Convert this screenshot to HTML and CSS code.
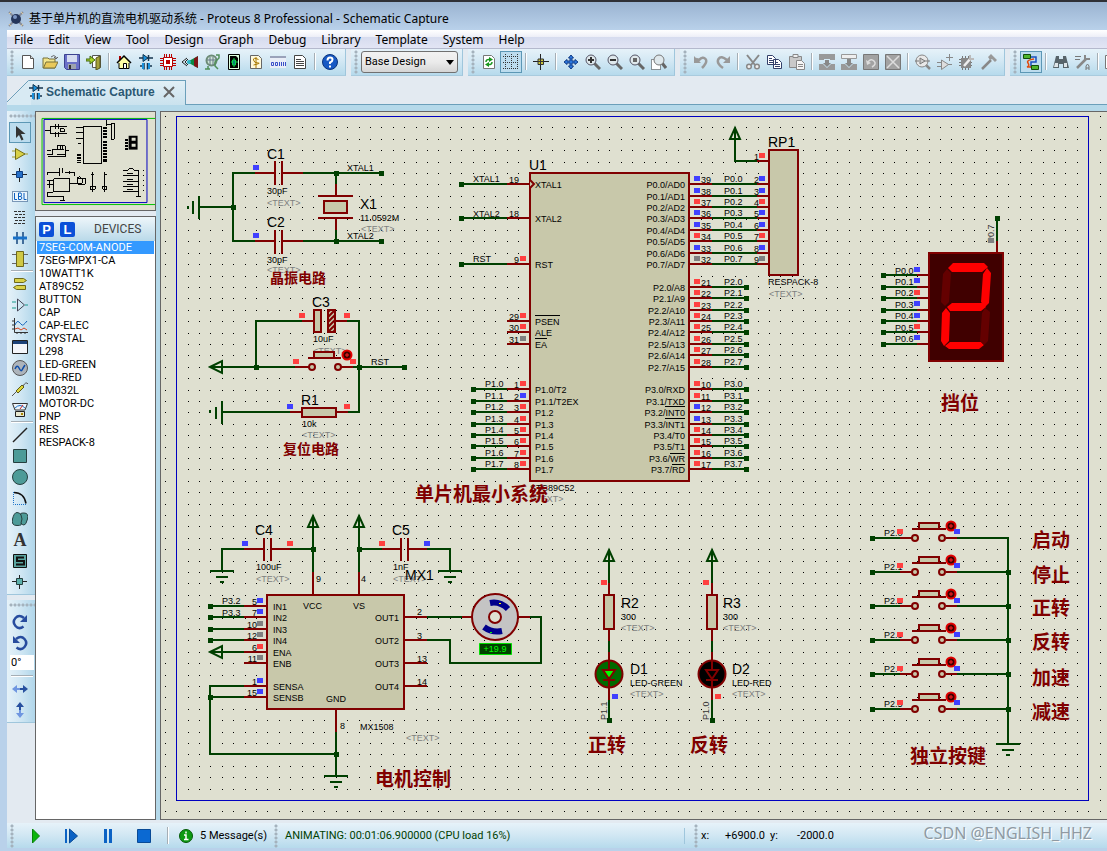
FILE: index.html
```html
<!DOCTYPE html>
<html lang="zh-CN">
<head>
<meta charset="utf-8">
<title>基于单片机的直流电机驱动系统 - Proteus 8 Professional - Schematic Capture</title>
<link rel="stylesheet" href="styles.css">
</head>
<body>
<div class="window">
<header class="titlebar">
<svg class="icon" viewBox="0 0 16 16"><path d="M1 1l4 4M15 1l-4 4M1 15l4-4M15 15l-4-4" stroke="#8a8f9a" stroke-width="2"/><path d="M1 3l2-2M13 1l2 2M1 13l2 2M15 13l-2 2" stroke="#d9c9a0"/><circle cx="8" cy="8" r="5" fill="#25365c"/><circle cx="7" cy="6" r="2" fill="#7d96c4"/></svg>
<span>基于单片机的直流电机驱动系统 - Proteus 8 Professional - Schematic Capture</span>
</header>
<div class="client">
<nav class="menubar">
<button>File</button><button>Edit</button><button>View</button><button>Tool</button><button>Design</button><button>Graph</button><button>Debug</button><button>Library</button><button>Template</button><button>System</button><button>Help</button>
</nav>
<div class="toolbars">
<div class="bar">
<i class="grip"></i>
<button aria-label="New"><svg class="icon" viewBox="0 0 16 16"><path d="M2.500 1.500h8l3 3v10h-11z" fill="#fff" stroke="#555"/><path d="M10.500 1.500v3h3" fill="#ddd" stroke="#555"/></svg></button>
<button aria-label="Open"><svg class="icon" viewBox="0 0 16 16"><path d="M1 4h5l1 1h6v9H1z" fill="#f2e58c" stroke="#77703a"/><path d="M1.500 14L4 8h12l-3 6z" fill="#e9c95a" stroke="#77703a"/><path d="M9 3q3-3 5 0v2m-2-2l2 2 2-2" fill="none" stroke="#666"/></svg></button>
<button aria-label="Save"><svg class="icon" viewBox="0 0 16 16"><path d="M.5.5h15v15h-13l-2-2z" fill="#6a70c8" stroke="#3c4290"/><path d="M3 1h10v7H3z" fill="#d5dcf0"/><path d="M4 10h8v5H4z" fill="#9da3ae"/><path d="M5 11h2v4H5z" fill="#333"/></svg></button>
<button aria-label="Close"><svg class="icon" viewBox="0 0 16 16"><path d="M6.500 1.500h8v12h-8z" fill="#fff" stroke="#555"/><path d="M14 2v12l-4 2V4z" fill="#a6a23a" stroke="#55531b"/><path d="M0 5h4V2l5 4-5 4V7H0z" fill="#a5d52b" stroke="#456812"/></svg></button>
<i class="sep"></i>
<button aria-label="Home"><svg class="icon" viewBox="0 0 16 16"><path d="M3 8v6.500h10V8" fill="#ffffa5" stroke="#000"/><path d="M3 2h2v3L3 7z" fill="#b00000"/><path d="M1 9l7-7 7 7" fill="#ffffa5" stroke="#000" stroke-width="1.500"/><path d="M4 14V8l4-4 4 4v6z" fill="#ffffa5"/><path d="M7.500 9.500h3v5h-3z" fill="#fff" stroke="#000"/></svg></button>
<button aria-label="Schematic"><svg class="icon" viewBox="0 0 16 16"><path d="M1 4h14M2 12h4M10 12h4M6 9v6.500M9.500 9v6.500M10.500 1v6" stroke="#15334c" stroke-width="1.500"/><path d="M5 .5l5 3.500-5 3.500z" fill="#1a91dd" stroke="#12344c"/><path d="M4 9h2v6H4zm6 0h2v6h-2z" fill="#1a91dd"/></svg></button>
<button aria-label="PCB"><svg class="icon" viewBox="0 0 16 16"><path d="M4.500 0v16M6.500 0v16M9.500 0v16M11.500 0v16M0 4.500h16M0 6.500h16M0 9.500h16M0 11.500h16" stroke="#b00"/><path d="M3.500 3.500h9v9h-9z" fill="#fff" stroke="#b00"/><path d="M6 6h4v4H6z" fill="#b00"/></svg></button>
<button aria-label="3D view"><svg class="icon" viewBox="0 0 16 16"><path d="M0 8l5-4M0 8l5 4M3 8l3-3M3 8l3 3" stroke="#222"/><path d="M5 8l11-6v12z" fill="#0b8a44"/><path d="M12 4.500L16 2v12l-4-2z" fill="#7d1518"/><circle cx="7" cy="8" r="2" fill="#29b3c7"/></svg></button>
<button aria-label="Gerber"><svg class="icon" viewBox="0 0 16 16"><circle cx="7.500" cy="6.500" r="5" fill="#cfe6d7" stroke="#6c8b77" stroke-width="2"/><path d="M3 6h9M6 3v8M9 3v8" stroke="#678"/><path d="M12 1h3v3l-4 4v4l3 3M4 12v3M1 15h5" fill="none" stroke="#4f8f58" stroke-width="1.500"/></svg></button>
<button aria-label="Design explorer"><svg class="icon" viewBox="0 0 16 16"><path d="M2.500.500h11v15h-11z" fill="#dfffe0" stroke="#000"/><path d="M4 2h6l2 2v10H4z" fill="#000"/><path d="M8 4v2m0 5v2M5 8h1m4 0h2M6.500 6h3v5h-3z" stroke="#0fd24c" fill="#087"/></svg></button>
<button aria-label="Bill of materials"><svg class="icon" viewBox="0 0 16 16"><path d="M2.500 1.500h8l3 3v10h-11z" fill="#fff9dc" stroke="#666"/><path d="M10.500 5.500Q5 3 5.500 6T10 9t-4.500 2M8 3v11" fill="none" stroke="#a87800"/></svg></button>
<button aria-label="Source"><svg class="icon" viewBox="0 0 16 16"><path d="M0 2h16v12H0z" fill="#e9edf7"/><path d="M0 2h16v2H0z" fill="#9aa2ba"/><path d="M1.500 8.500h2v3h-2zM5.500 8.500h2v3h-2z" fill="none" stroke="#3a4fc8"/><path d="M9.500 8v4m2-4v4m2-4v4m2-4v4" stroke="#3a4fc8"/></svg></button>
<button aria-label="Notes"><svg class="icon" viewBox="0 0 16 16"><path d="M2.500 1.500h8l3 3v10h-11z" fill="#fff" stroke="#444"/><path d="M4 5.500h5M4 7.500h8M4 9.500h8M4 11.500h8" stroke="#444"/></svg></button>
<i class="sep"></i>
<button aria-label="Help"><svg class="icon" viewBox="0 0 16 16"><circle cx="8" cy="8" r="7.500" fill="#1759c4" stroke="#0b347c"/><path d="M5.500 6.500q0-3 2.500-3t2.500 2.300Q10.500 7.500 8 8.500v1.500M8 11.500v2" fill="none" stroke="#fff" stroke-width="2"/></svg></button>
</div>
<div class="bar">
<i class="grip"></i>
<label class="variant"><select aria-label="Design variant"><option>Base Design</option></select><svg viewBox="0 0 8 5"><path d="M0 0h8L4 5z"/></svg></label>
</div>
<div class="bar">
<i class="grip"></i>
<button aria-label="Redraw"><svg class="icon" viewBox="0 0 16 16"><path d="M2.500 1.500h8l3 3v10h-11z" fill="#fff" stroke="#777"/><path d="M5 8q0-3 4-2.500M11 8q0 3-4 2.500" fill="none" stroke="#18961d" stroke-width="1.500"/><path d="M8 3l4 2.500L8 8zM8 8v5l-4-2.500z" fill="#18961d"/></svg></button>
<button class="on" aria-label="Grid"><svg class="icon" viewBox="0 0 16 16"><path d="M0 2.500h16M0 8.500h16M0 14.500h16M2.500 0v16M8.500 0v16M14.500 0v16" stroke="#333" stroke-dasharray="1 1"/></svg></button>
<i class="sep"></i>
<button aria-label="Origin"><svg class="icon" viewBox="0 0 16 16"><path d="M7.500 0v16M0 7.500h16" stroke="#222"/><path d="M5 5h5.500v5.500H5z" fill="#c9c43a" stroke="#333"/><path d="M7.500 5v6M5 7.500h6" stroke="#333"/></svg></button>
<i class="sep"></i>
<button aria-label="Pan"><svg class="icon" viewBox="0 0 16 16"><path d="M8 1l2.500 3H9v3h3V5.500L15 8l-3 2.500V9H9v3h1.500L8 15l-2.500-3H7V9H4v1.500L1 8l3-2.500V7h3V4H5.500z" fill="#2c77dd" stroke="#123c85"/></svg></button>
<button aria-label="Zoom in"><svg class="icon" viewBox="0 0 16 16"><path d="M9 9l6 6" stroke="#666" stroke-width="3"/><circle cx="6" cy="6" r="5" fill="#dfe8ec" stroke="#556"/><path d="M3 6h6M6 3v6" stroke="#333" stroke-width="2"/></svg></button>
<button aria-label="Zoom out"><svg class="icon" viewBox="0 0 16 16"><path d="M9 9l6 6" stroke="#666" stroke-width="3"/><circle cx="6" cy="6" r="5" fill="#dfe8ec" stroke="#556"/><path d="M3 6h6" stroke="#333" stroke-width="2"/></svg></button>
<button aria-label="Zoom all"><svg class="icon" viewBox="0 0 16 16"><path d="M9 9l6 6" stroke="#666" stroke-width="3"/><circle cx="6" cy="6" r="5" fill="#dfe8ec" stroke="#556"/><path d="M4 4h4v4H4z" fill="#666"/></svg></button>
<button aria-label="Zoom area"><svg class="icon" viewBox="0 0 16 16"><path d="M.5 5.500h9v10h-9z" fill="#fff" stroke="#333" stroke-dasharray="1 1"/><path d="M11 9l4 5" stroke="#666" stroke-width="3"/><circle cx="8" cy="6" r="5" fill="#dfe8ec" stroke="#777"/></svg></button>
</div>
<div class="bar">
<i class="grip"></i>
<button aria-label="Undo"><svg class="icon" viewBox="0 0 16 16"><path d="M3 5l3 1q4-4 6.500-1t-3.500 9" fill="none" stroke="#999" stroke-width="2.500"/><path d="M1 2v7h7z" fill="#999"/></svg></button>
<button aria-label="Redo"><svg class="icon" viewBox="0 0 16 16"><path d="M12 6Q6 1 3.500 5T8 14" fill="none" stroke="#999" stroke-width="2.500"/><path d="M15 2v7H8z" fill="#999"/></svg></button>
<i class="sep"></i>
<button aria-label="Cut"><svg class="icon" viewBox="0 0 16 16"><path d="M2 1l8 10M14 1L6 11" stroke="#888" stroke-width="2"/><circle cx="4" cy="12.500" r="2.300" fill="#eee" stroke="#888" stroke-width="1.500"/><circle cx="12" cy="12.500" r="2.300" fill="#eee" stroke="#888" stroke-width="1.500"/></svg></button>
<button aria-label="Copy"><svg class="icon" viewBox="0 0 16 16"><path d="M.5 1.500h5l3 3v6h-8zM6.500 5.500h5l3 3v6h-8z" fill="#fff" stroke="#33406a"/><path d="M2 4.500h3M2 6.500h4M2 8.500h4M8 8.500h3M8 10.500h5M8 12.500h5" stroke="#33406a"/></svg></button>
<button aria-label="Paste"><svg class="icon" viewBox="0 0 16 16"><path d="M.5 2.500h12v11H.5z" fill="#c9c9c9" stroke="#888"/><path d="M4 .5h5v3H4z" fill="#eee" stroke="#888"/><path d="M7.500 6.500h5l3 3v6h-8z" fill="#f5f5f5" stroke="#888"/><path d="M9 10.500h5M9 12.500h5" stroke="#888"/></svg></button>
<i class="sep"></i>
<button aria-label="Block copy"><svg class="icon" viewBox="0 0 16 16"><path d="M0 0h16v6h-5V5H5v1H0zM0 10h4l4 4 4-4h4v6H0z" fill="#999"/><path d="M6 6h4v3h2l-4 4-4-4h2z" fill="#888"/></svg></button>
<button aria-label="Block move"><svg class="icon" viewBox="0 0 16 16"><path d="M.5.5h15v4H.5z" fill="#eee" stroke="#999"/><path d="M0 10h4l4 4 4-4h4v6H0z" fill="#999"/><path d="M6 5h4v4h2l-4 4-4-4h2z" fill="#888"/></svg></button>
<button aria-label="Block rotate"><svg class="icon" viewBox="0 0 16 16"><path d="M.5.5h15v15H.5z" fill="#a2a2a2" stroke="#777"/><path d="M5 8q3-4 6-1t-2 6" fill="none" stroke="#ddd" stroke-width="1.500"/><path d="M3 6l5 3-4 2z" fill="#ddd"/></svg></button>
<button aria-label="Block delete"><svg class="icon" viewBox="0 0 16 16"><path d="M.5.5h15v15H.5z" fill="#a2a2a2" stroke="#777"/><path d="M2 2l12 12M14 2L2 14" stroke="#ddd" stroke-width="1.500"/></svg></button>
<i class="sep"></i>
<button aria-label="Pick parts"><svg class="icon" viewBox="0 0 16 16"><path d="M10 10l5 5" stroke="#888" stroke-width="2.500"/><circle cx="7" cy="7" r="6" fill="#e8e8e8" stroke="#888"/><path d="M0 7h4M10 7h5M5 4l5 3-5 3z" fill="#ccc" stroke="#777"/></svg></button>
<button aria-label="Make device"><svg class="icon" viewBox="0 0 16 16"><path d="M0 8.500h4M0 12.500h4M11 10.500h4M4.500 6l7 4.500-7 5zM12.500 0v7M9 3.500h7" fill="#ddd" stroke="#888"/></svg></button>
<button aria-label="Packaging tool"><svg class="icon" viewBox="0 0 16 16"><path d="M3.500 2v14M6.500 2v14M9.500 2v14M0 5.500h13M0 8.500h13M0 11.500h13" stroke="#777"/><path d="M2 4h10v10H2z" fill="#888"/><path d="M5 12l7-8" stroke="#eee" stroke-width="2.500"/><path d="M11 1v4h4" fill="none" stroke="#bbb" stroke-width="2"/></svg></button>
<button aria-label="Decompose"><svg class="icon" viewBox="0 0 16 16"><path d="M1 15l9-9" stroke="#888" stroke-width="2.500"/><path d="M7 3l3-3 6 6-2 2-3-3-2 1z" fill="#999"/></svg></button>
</div>
<div class="bar last">
<i class="grip"></i>
<button class="on" aria-label="Wire autorouter"><svg class="icon" viewBox="0 0 16 16"><path d="M8 3h5v5H8v5h2" fill="none" stroke="#1b4fc0" stroke-width="1.500"/><path d="M11 5q-8 1-6 4t-1 4h5" fill="none" stroke="#e04b10" stroke-width="1.500"/><path d="M.5.500h7v4h-7zM8.500 11.500h7v4h-7z" fill="#4db52c" stroke="#124d0a"/></svg></button>
<i class="sep"></i>
<button aria-label="Search"><svg class="icon" viewBox="0 0 16 16"><path d="M3 2h3v3h4V2h3l3 12h-6v-4H6v4H0z" fill="#58646a"/><path d="M2 9h3v4H1zm9 0h3v4h-3z" fill="#dfe5e8"/></svg></button>
<button aria-label="Property tool"><svg class="icon" viewBox="0 0 16 16"><path d="M0 2.500h6M0 5.500h5" stroke="#777"/><path d="M2 14L11 5" stroke="#888" stroke-width="2.500"/><path d="M10 1v4h5" fill="none" stroke="#888" stroke-width="2"/><path d="M11 16v-4l1.500-2 1.500 2v4M11 14h3" fill="none" stroke="#777"/></svg></button>
<i class="sep"></i>
<button aria-label="New sheet"><svg class="icon" viewBox="0 0 16 16"><path d="M.5 1.500h13v13H.5z" fill="#fff" stroke="#777"/><path d="M7 4v8M3 8h8" stroke="#888" stroke-width="2"/></svg></button>
</div>
</div>
<div class="tabs">
<svg class="slope" viewBox="0 0 24 25"><path d="M0 24L21.500.5H24V25H0z" fill="#d8eaf3"/><path d="M0 22L21.500.5H24" fill="none" stroke="#6b9fba"/></svg>
<div class="tab">
<svg class="icon" viewBox="0 0 16 16"><path d="M1 4h14M2 12h4M10 12h4M6 9v6.500M9.500 9v6.500M10.500 1v6" stroke="#15334c" stroke-width="1.500"/><path d="M5 .5l5 3.500-5 3.500z" fill="#1a91dd" stroke="#12344c"/><path d="M4 9h2v6H4zm6 0h2v6h-2z" fill="#1a91dd"/></svg>
<span>Schematic Capture</span>
<button aria-label="Close tab"><svg viewBox="0 0 12 12"><path d="M1 1l10 10M11 1L1 11" stroke="#666" stroke-width="2"/></svg></button>
</div>
</div>
<main class="work">
<aside class="tools">
<div class="vbar">
<i class="grip"></i>
<button class="on" aria-label="Selection"><svg class="icon" viewBox="0 0 16 16"><path d="M4 1v12l3-3 2.500 5.500 2-1L9 9h4.500z" fill="#333"/></svg></button>
<button aria-label="Component"><svg class="icon" viewBox="0 0 16 16"><path d="M0 5h4M0 11h4M12 8h4" stroke="#a39d2c"/><path d="M3.500 2.500L13 8l-9.500 5.500z" fill="#d8d147" stroke="#726c16"/></svg></button>
<button aria-label="Junction"><svg class="icon" viewBox="0 0 16 16"><path d="M7.500 1v14M0 7.500h15" stroke="#222"/><path d="M4.500 4.500h6v6h-6z" fill="#2670c9" stroke="#0e3f84"/></svg></button>
<button aria-label="Wire label"><svg class="icon" viewBox="0 0 16 16"><path d="M.5 3.500h15v10H.5z" fill="#eaf5fc" stroke="#123f75" stroke-dasharray="1 1"/><path d="M2.500 5v6.500H5M6.500 5v6.500H9l1-1.500-1-1.500H6.500M9 8.500l.5-2L9 5H6.500M12 5v6.500h2.500" fill="none" stroke="#0a5fc0"/></svg></button>
<button aria-label="Text script"><svg class="icon" viewBox="0 0 16 16"><path d="M2 2.500h12M3 5.500h10M2 8.500h12M3 11.500h10M2 14.500h12" stroke="#333" stroke-dasharray="3 1"/></svg></button>
<button aria-label="Bus"><svg class="icon" viewBox="0 0 16 16"><path d="M5 2v5M5 9v5M11 2v5M11 9v5" stroke="#14457e" stroke-width="1.500"/><path d="M1 8h14" stroke="#1971c8" stroke-width="3"/></svg></button>
<button aria-label="Subcircuit"><svg class="icon" viewBox="0 0 16 16"><path d="M0 3.500h16M0 12.500h16" stroke="#666"/><path d="M4.500.500h7v15h-7z" fill="#cfc845" stroke="#6d681b"/></svg></button>
<i class="sep"></i>
<button aria-label="Terminal"><svg class="icon" viewBox="0 0 16 16"><path d="M2.500 2.500h9l3 2-3 2h-9zM13.500 9.500h-9l-3 2 3 2h9z" fill="#d8d147" stroke="#6d681b"/></svg></button>
<button aria-label="Device pin"><svg class="icon" viewBox="0 0 16 16"><path d="M0 5h4M0 11h4M13 8h3" stroke="#1a9a8c"/><path d="M5.500 2v12l7-6z" fill="none" stroke="#445"/></svg></button>
<button aria-label="Graph"><svg class="icon" viewBox="0 0 16 16"><path d="M2.500 0v14.500H16M0 3h2M0 7h2M0 11h2M5 14v2M9 14v2M13 14v2" fill="none" stroke="#333"/><path d="M3 7q2-5 4-3t3 3 5-4" fill="none" stroke="#1565bb"/><path d="M3 11l3-1 3 2 3-2 3 2" fill="none" stroke="#d3431f"/></svg></button>
<button aria-label="Active popup"><svg class="icon" viewBox="0 0 16 16"><path d="M.5 1.500h15v13H.5z" fill="#f4f6fa" stroke="#222"/><path d="M1 2h14v3H1z" fill="#1d4279"/></svg></button>
<button aria-label="Generator"><svg class="icon" viewBox="0 0 16 16"><circle cx="8" cy="8" r="7.500" fill="#adb4bb" stroke="#555"/><path d="M3 9q2-5 4-1t3 2 3-5" fill="none" stroke="#0e4da8" stroke-width="1.500"/></svg></button>
<button aria-label="Probe"><svg class="icon" viewBox="0 0 16 16"><path d="M0 15l5-5" stroke="#555"/><path d="M4 10l6-6 2 2-6 6z" fill="#ddd63d" stroke="#5f5a16"/><path d="M11 5q3-5 5-2" fill="none" stroke="#555"/></svg></button>
<button aria-label="Instruments"><svg class="icon" viewBox="0 0 16 16"><path d="M.5 1.500h15L13 8H3z" fill="#eef5fa" stroke="#333"/><path d="M3 6q5-5 10 0" fill="none" stroke="#1971c8"/><path d="M8 7l3-4" stroke="#c22"/><path d="M3.500 9.500h9v5h-9z" fill="#e8e8d0" stroke="#222"/><path d="M9 12h2" stroke="#a80" stroke-width="2"/></svg></button>
<i class="sep"></i>
<button aria-label="Line"><svg class="icon" viewBox="0 0 16 16"><path d="M1 15L15 1" stroke="#222" stroke-width="1.500"/></svg></button>
<button aria-label="Box"><svg class="icon" viewBox="0 0 16 16"><path d="M1.500 1.500h13v13h-13z" fill="#4d9b98" stroke="#263f3f"/></svg></button>
<button aria-label="Circle"><svg class="icon" viewBox="0 0 16 16"><circle cx="8" cy="8" r="7.500" fill="#4d9b98" stroke="#263f3f"/></svg></button>
<button aria-label="Arc"><svg class="icon" viewBox="0 0 16 16"><path d="M1.500 2v12.500H14" fill="none" stroke="#1971c8" stroke-dasharray="1 1"/><path d="M2 2.500q10 0 12 11" fill="none" stroke="#111" stroke-width="1.500"/></svg></button>
<button aria-label="Path"><svg class="icon" viewBox="0 0 16 16"><path d="M9 4Q8 1.500 5 1.500T.5 8 5 14.500 9 12q1 2 3 2t3.500-6T12 2 9 4z" fill="#4d9b98" stroke="#263f3f"/><path d="M9 4q2 4 0 8" fill="none" stroke="#263f3f"/></svg></button>
<button aria-label="Text"><span class="letter">A</span></button>
<button aria-label="Symbol"><svg class="icon" viewBox="0 0 16 16"><path d="M1.500 1.500h13v13h-13z" fill="#5aa5a1" stroke="#111"/><path d="M12 4.500H5V8h7v3.500H4" fill="none" stroke="#111" stroke-width="2"/></svg></button>
<button aria-label="Marker"><svg class="icon" viewBox="0 0 16 16"><path d="M7.500 1v14M0 7.500h15" stroke="#222"/><path d="M4.500 4.500h6v6h-6z" fill="#5cb0ab" stroke="#263f3f"/></svg></button>
</div>
<div class="vbar">
<i class="grip"></i>
<button aria-label="Rotate clockwise"><svg class="icon" viewBox="0 0 16 16"><path d="M12 4Q7 0 3.500 4t0 8 8 .5" fill="none" stroke="#274c9e" stroke-width="2.500"/><path d="M15 1v7H8z" fill="#274c9e"/></svg></button>
<button aria-label="Rotate anticlockwise"><svg class="icon" viewBox="0 0 16 16"><path d="M4 4q5-4 8.500 0t0 8-8 .5" fill="none" stroke="#274c9e" stroke-width="2.500"/><path d="M1 1v7h7z" fill="#274c9e"/></svg></button>
<input class="angle" aria-label="Rotation angle" value="0°">
<i class="sep"></i>
<button aria-label="Mirror X"><svg class="icon" viewBox="0 0 16 16"><path d="M8 7H5V4L0 8l5 4V9h3z" fill="#6f96e0"/><path d="M8 7h3V4l5 4-5 4V9H8z" fill="#27509f"/></svg></button>
<button aria-label="Mirror Y"><svg class="icon" viewBox="0 0 16 16"><path d="M7 8V5H4l4-5 4 5H9v3z" fill="#27509f"/><path d="M7 8v3H4l4 5 4-5H9V8z" fill="#6f96e0"/></svg></button>
</div>
</aside>
<section class="side">
<div class="preview">
<svg viewBox="36 112 119 99">
<path d="M156 118.500H41.500v87H156" fill="none" stroke="#00c000"/>
<path d="M43.500 119.500h104v84h-104z" fill="none" stroke="#0000c0"/>
<g fill="none" stroke="#000" shape-rendering="crispEdges">
<path d="M83.500 126.500h18v38h-18zM111.500 123.500h3v16h-3zM53.500 179.500h16v13h-16z"/>
<path d="M44 130.500h6v-4h17M50 130v4h17M55 124v5M58 124v5M55 132v5M58 132v5M60 129h4v3h-4zM107 120v5h4M107 124v2"/>
<path d="M47 155h5v-5h5v-4h8v9h-8M47 151h4M65 151h4M57 150h7M60 145v4M62 145v4M48 157h17v-7"/>
<path d="M76 127.500h7M76 132.500h7M76 138.500h7M78 144h3"/>
<path d="M104 127v12M106.500 127v12M104 141v22M106.500 141v22M80 154v10M78 154v10" stroke-width="2" stroke-dasharray="2 1"/>
<path d="M127 139v11" stroke-width="3" stroke-dasharray="2 1"/>
<path d="M47 176v-3h12v4M59 169v5M62 169v5M65 173h9v4M69 172v3M47 181h7M47 185h7M49 181v8M47 193v4h16v5M60 201h5M69 184h10M78 179h7v6h-7M48 193h5M77 178q3-2 5 2v4h-5z"/>
<path d="M92 173v20M105 173v20M91 175h3M104 175h3M90 187h5v3h-5zM103 187h4v3h-4z"/>
<path d="M123 171h5l2-2h3l2 2h4v27M123 176h16M123 182h16M123 187h16M123 192h16M127 174h6M127 180h6M127 185h6M127 190h6M136 197h5"/>
<path d="M144 171v23" stroke-dasharray="1 4"/>
</g>
<path d="M129 136h9v14h-9z"/><path d="M132 138h4v3h-4zM132 144h4v3h-4z" fill="#dfe0d0"/>
</svg>
</div>
<div class="devices">
<div class="devhead"><button>P</button><button>L</button><span>DEVICES</span></div>
<ul>
<li class="sel">7SEG-COM-ANODE</li><li>7SEG-MPX1-CA</li><li>10WATT1K</li><li>AT89C52</li><li>BUTTON</li><li>CAP</li><li>CAP-ELEC</li><li>CRYSTAL</li><li>L298</li><li>LED-GREEN</li><li>LED-RED</li><li>LM032L</li><li>MOTOR-DC</li><li>PNP</li><li>RES</li><li>RESPACK-8</li>
</ul>
</div>
</section>
<section class="canvas">
<svg class="sheet">
<defs>
<pattern id="grid" x="176" y="116" width="57" height="57" patternUnits="userSpaceOnUse"><path d="M0 .5h57M0 11.500h57M0 23.500h57M0 34.500h57M0 46.500h57" stroke="#000" stroke-dasharray="1 11 1 10 1 10 1 11 1 10"/></pattern>
<pattern id="hatch" width="5" height="5" patternUnits="userSpaceOnUse"><path d="M-1 6L6-1M-1 1l2-2M4 6l2-2" stroke="#800000" stroke-width="2"/></pattern>
<path id="n" class="node" d="M-2-2h5v5h-5z"/>
<path id="r" fill="#ff4040" d="M-3-3h6v5h-6z"/>
<path id="b" fill="#4040ff" d="M-3-3h6v5h-6z"/>
<path id="y" fill="#808080" d="M-3-3h6v5h-6z"/>
<path id="pwr" class="w" d="M0 0l5 11h-10zV12"/>
<g id="gnd" class="w"><path d="M-12 0h24M-6 6h12M-2 11h4"/></g>
<g id="knob"><circle r="4.500" fill="#400000" stroke="#e00000" stroke-width="2"/><path d="M-2 0h4M0-2v4" stroke="#ff2020"/></g>
<g id="key">
<path class="w" d="M0 0h28M85 0h52"/><path class="p" d="M28 0h12M74 0h11M40-9h34"/>
<path class="c" d="M47-15h20v6h-20z"/><circle class="c" cx="43" r="3"/><circle class="c" cx="70" r="3"/>
<use href="#n"/><use href="#knob" x="79" y="-12"/>
</g>
</defs>
<g transform="translate(-161 -112)">
<rect x="161" y="112" width="100%" height="100%" fill="url(#grid)"/>
<path d="M176.500 116.500h912v684h-912z" fill="none" stroke="#0000c0"/>
<g class="t"><text class="g" x="313" y="354">&lt;TEXT&gt;</text></g>

<g class="w">
<path d="M199 207h34M255 173h-22v68h22M303 173h78M303 241h78M336 173v11M336 230v11M193 201v13M199 196v23M188 206v3"/>
<path d="M302 321h-46v46M210 367h85M347 321h12v91h-11M353 367h51M290 412h-68M222 401v23M216 407v12M210 410v3M210 367l12-6v12z"/>
<path d="M461 184h46M461 218h46M461 264h46M473 389h34M473 401h34M473 412h34M473 424h34M473 435h34M473 446h34M473 458h34M473 469h34"/>
<path d="M712 184h45M712 196h45M712 207h45M712 218h45M712 230h45M712 241h45M712 253h45M712 264h45M735 139v22h22"/>
<path d="M712 287h35M712 298h35M712 310h35M712 321h35M712 332h35M712 344h35M712 355h35M712 367h35M712 389h35M712 401h35M712 412h35M712 424h35M712 435h35M712 446h35M712 458h35M712 469h35"/>
<path d="M313 527v45M359 527v45M244 549h-22v22M290 549h23M359 549h23M427 549h23v22"/>
<path d="M210 606h34M210 617h34M210 629h34M210 640h34M210 652h34M210 652l12-6v12zM244 686h-34v68h126M210 697h34M336 732v44M427 617h35M427 640h23v23h91v-46h-11"/>
<path d="M609 560v23M609 641v11M609 700v20M712 560v23M712 641v11M712 700v20"/>
<path d="M883 275h34M883 287h34M883 298h34M883 310h34M883 321h34M883 332h34M883 344h34M997 218v23M1008 538v206"/>
</g>
<use href="#pwr" x="735" y="128"/><use href="#pwr" x="313" y="516"/><use href="#pwr" x="359" y="516"/><use href="#pwr" x="609" y="550"/><use href="#pwr" x="712" y="550"/>
<use href="#gnd" x="222" y="571"/><use href="#gnd" x="450" y="571"/><use href="#gnd" x="336" y="776"/><use href="#gnd" x="1008" y="744"/>

<g class="p">
<path d="M255 173h20M282 173h21M275 161v24M282 161v24M255 241h20M282 241h21M275 230v24M282 230v24M336 184v12M318 196h35M318 218h35M336 218v12"/>
<path d="M302 321h12M335 321h12M295 367h14M341 367h12M308 358h33M290 412h12M336 412h12"/>
<path d="M507 184h23M507 218h23M507 264h23M507 321h23M507 332h23M507 344h23M507 389h23M507 401h23M507 412h23M507 424h23M507 435h23M507 446h23M507 458h23M507 469h23"/>
<path d="M689 184h23M689 196h23M689 207h23M689 218h23M689 230h23M689 241h23M689 253h23M689 264h23M757 161h12M757 184h12M757 196h12M757 207h12M757 218h12M757 230h12M757 241h12M757 253h12M757 264h12"/>
<path d="M689 287h23M689 298h23M689 310h23M689 321h23M689 332h23M689 344h23M689 355h23M689 367h23M689 389h23M689 401h23M689 412h23M689 424h23M689 435h23M689 446h23M689 458h23M689 469h23"/>
<path d="M313 572v23M359 572v23M244 549h20M271 549h19M264 538v23M271 538v23M382 549h19M408 549h19M401 538v23M408 538v23"/>
<path d="M244 606h23M244 617h23M244 629h23M244 640h23M244 652h23M244 663h23M244 686h23M244 697h23M404 617h23M404 640h23M404 663h23M404 686h23M336 709v23M462 617h11M518 617h12"/>
<path d="M609 583v12M609 629v12M609 652v9M609 688v12M712 583v12M712 629v12M712 652v9M712 688v12"/>
<path d="M917 275h12M917 287h12M917 298h12M917 310h12M917 321h12M917 332h12M917 344h12M997 241v12"/>
</g>
<g class="c">
<path d="M324 201h23v12h-23zM314 310h7v22h-7zM314 352h20v6h-20zM302 408h34v9h-34zM530 173h159v308h-159zM769 150h29v125h-29zM267 595h137v114h-137zM604 595h10v34h-10zM707 595h10v34h-10z"/>
<path d="M530 180l4 4-4 4"/><circle cx="312" cy="367" r="3"/><circle cx="338" cy="367" r="3"/>
</g>
<path d="M328 310h7v22h-7z" fill="#c8c8aa"/><path class="hatched" d="M328 310h7v22h-7z"/>
<use href="#knob" x="347" y="355"/>

<g><use href="#n" x="233" y="207"/><use href="#n" x="336" y="173"/><use href="#n" x="336" y="241"/><use href="#n" x="381" y="173"/><use href="#n" x="381" y="241"/><use href="#n" x="256" y="367"/><use href="#n" x="359" y="367"/><use href="#n" x="404" y="367"/><use href="#n" x="461" y="184"/><use href="#n" x="461" y="218"/><use href="#n" x="461" y="264"/>
<use href="#n" x="473" y="389"/><use href="#n" x="473" y="401"/><use href="#n" x="473" y="412"/><use href="#n" x="473" y="424"/><use href="#n" x="473" y="435"/><use href="#n" x="473" y="446"/><use href="#n" x="473" y="458"/><use href="#n" x="473" y="469"/>
<use href="#n" x="746" y="287"/><use href="#n" x="746" y="298"/><use href="#n" x="746" y="310"/><use href="#n" x="746" y="321"/><use href="#n" x="746" y="332"/><use href="#n" x="746" y="344"/><use href="#n" x="746" y="355"/><use href="#n" x="746" y="367"/><use href="#n" x="746" y="389"/><use href="#n" x="746" y="401"/><use href="#n" x="746" y="412"/><use href="#n" x="746" y="424"/><use href="#n" x="746" y="435"/><use href="#n" x="746" y="446"/><use href="#n" x="746" y="458"/><use href="#n" x="746" y="469"/>
<use href="#n" x="313" y="549"/><use href="#n" x="359" y="549"/><use href="#n" x="210" y="606"/><use href="#n" x="210" y="617"/><use href="#n" x="210" y="629"/><use href="#n" x="210" y="640"/><use href="#n" x="210" y="697"/><use href="#n" x="336" y="754"/><use href="#n" x="609" y="720"/><use href="#n" x="712" y="720"/>
<use href="#n" x="883" y="275"/><use href="#n" x="883" y="287"/><use href="#n" x="883" y="298"/><use href="#n" x="883" y="310"/><use href="#n" x="883" y="321"/><use href="#n" x="883" y="332"/><use href="#n" x="883" y="344"/><use href="#n" x="997" y="218"/>
<use href="#n" x="1008" y="572"/><use href="#n" x="1008" y="606"/><use href="#n" x="1008" y="640"/><use href="#n" x="1008" y="674"/><use href="#n" x="1008" y="709"/></g>

<g class="t">
<text class="g"><tspan x="267" y="206">&lt;TEXT&gt;</tspan><tspan x="267" y="273">&lt;TEXT&gt;</tspan><tspan x="361" y="232">&lt;TEXT&gt;</tspan><tspan x="302" y="438">&lt;TEXT&gt;</tspan><tspan x="530" y="502">&lt;TEXT&gt;</tspan><tspan x="769" y="297">&lt;TEXT&gt;</tspan><tspan x="256" y="582">&lt;TEXT&gt;</tspan><tspan x="393" y="582">&lt;TEXT&gt;</tspan><tspan x="406" y="741">&lt;TEXT&gt;</tspan><tspan x="621" y="631">&lt;TEXT&gt;</tspan><tspan x="723" y="631">&lt;TEXT&gt;</tspan><tspan x="630" y="697">&lt;TEXT&gt;</tspan><tspan x="732" y="697">&lt;TEXT&gt;</tspan></text>
<text class="big"><tspan x="267" y="159">C1</tspan><tspan x="267" y="227">C2</tspan><tspan x="360" y="209">X1</tspan><tspan x="312" y="307">C3</tspan><tspan x="301" y="405">R1</tspan><tspan x="529" y="170">U1</tspan><tspan x="768" y="147">RP1</tspan><tspan x="255" y="535">C4</tspan><tspan x="392" y="535">C5</tspan><tspan x="405" y="580">MX1</tspan><tspan x="621" y="608">R2</tspan><tspan x="723" y="608">R3</tspan><tspan x="630" y="674">D1</tspan><tspan x="732" y="674">D2</tspan></text>
<text><tspan x="267" y="194">30pF</tspan><tspan x="267" y="263">30pF</tspan><tspan x="360" y="221">11.0592M</tspan><tspan x="347" y="171">XTAL1</tspan><tspan x="347" y="239">XTAL2</tspan><tspan x="313" y="342">10uF</tspan><tspan x="371" y="365">RST</tspan><tspan x="302" y="427">10k</tspan><tspan x="530" y="491">STC89C52</tspan><tspan x="768" y="285">RESPACK-8</tspan><tspan x="256" y="570">100uF</tspan><tspan x="393" y="570">1nF</tspan><tspan x="316" y="582">9</tspan><tspan x="361" y="582">4</tspan><tspan x="340" y="729">8</tspan><tspan x="360" y="730">MX1508</tspan><tspan x="621" y="620">300</tspan><tspan x="723" y="620">300</tspan><tspan x="630" y="686">LED-GREEN</tspan><tspan x="732" y="686">LED-RED</tspan></text>
<text><tspan x="473" y="182">XTAL1</tspan><tspan x="473" y="217">XTAL2</tspan><tspan x="473" y="262">RST</tspan><tspan x="535" y="188">XTAL1</tspan><tspan x="535" y="222">XTAL2</tspan><tspan x="535" y="268">RST</tspan><tspan x="535" y="325">PSEN</tspan><tspan x="535" y="336">ALE</tspan><tspan x="535" y="348">EA</tspan><tspan x="535" y="393">P1.0/T2</tspan><tspan x="535" y="405">P1.1/T2EX</tspan><tspan x="535" y="416">P1.2</tspan><tspan x="535" y="428">P1.3</tspan><tspan x="535" y="439">P1.4</tspan><tspan x="535" y="450">P1.5</tspan><tspan x="535" y="462">P1.6</tspan><tspan x="535" y="473">P1.7</tspan></text>
<text class="e"><tspan x="685" y="188">P0.0/AD0</tspan><tspan x="685" y="200">P0.1/AD1</tspan><tspan x="685" y="211">P0.2/AD2</tspan><tspan x="685" y="222">P0.3/AD3</tspan><tspan x="685" y="234">P0.4/AD4</tspan><tspan x="685" y="245">P0.5/AD5</tspan><tspan x="685" y="257">P0.6/AD6</tspan><tspan x="685" y="268">P0.7/AD7</tspan><tspan x="685" y="291">P2.0/A8</tspan><tspan x="685" y="302">P2.1/A9</tspan><tspan x="685" y="314">P2.2/A10</tspan><tspan x="685" y="325">P2.3/A11</tspan><tspan x="685" y="336">P2.4/A12</tspan><tspan x="685" y="348">P2.5/A13</tspan><tspan x="685" y="359">P2.6/A14</tspan><tspan x="685" y="371">P2.7/A15</tspan><tspan x="685" y="393">P3.0/RXD</tspan><tspan x="685" y="405">P3.1/TXD</tspan><tspan x="685" y="416">P3.2/INT0</tspan><tspan x="685" y="428">P3.3/INT1</tspan><tspan x="685" y="439">P3.4/T0</tspan><tspan x="685" y="450">P3.5/T1</tspan><tspan x="685" y="462">P3.6/WR</tspan><tspan x="685" y="473">P3.7/RD</tspan></text>
<path d="M535 315.500h25M535 338.500h12M665 406.500h20M665 418.500h20M670 453.500h15M672 464.500h13" stroke="#000"/>
<text class="e"><tspan x="519" y="183">19</tspan><tspan x="519" y="217">18</tspan><tspan x="519" y="263">9</tspan><tspan x="519" y="320">29</tspan><tspan x="519" y="331">30</tspan><tspan x="519" y="343">31</tspan><tspan x="519" y="388">1</tspan><tspan x="519" y="400">2</tspan><tspan x="519" y="411">3</tspan><tspan x="519" y="423">4</tspan><tspan x="519" y="434">5</tspan><tspan x="519" y="445">6</tspan><tspan x="519" y="457">7</tspan><tspan x="519" y="468">8</tspan><tspan x="759" y="160">1</tspan><tspan x="759" y="183">2</tspan><tspan x="759" y="195">3</tspan><tspan x="759" y="206">4</tspan><tspan x="759" y="217">5</tspan><tspan x="759" y="229">6</tspan><tspan x="759" y="240">7</tspan><tspan x="759" y="252">8</tspan><tspan x="759" y="263">9</tspan></text>
<text><tspan x="485" y="387">P1.0</tspan><tspan x="485" y="399">P1.1</tspan><tspan x="485" y="410">P1.2</tspan><tspan x="485" y="422">P1.3</tspan><tspan x="485" y="433">P1.4</tspan><tspan x="485" y="444">P1.5</tspan><tspan x="485" y="456">P1.6</tspan><tspan x="485" y="467">P1.7</tspan></text>
<text><tspan x="701" y="183">39</tspan><tspan x="701" y="195">38</tspan><tspan x="701" y="206">37</tspan><tspan x="701" y="217">36</tspan><tspan x="701" y="229">35</tspan><tspan x="701" y="240">34</tspan><tspan x="701" y="252">33</tspan><tspan x="701" y="263">32</tspan><tspan x="701" y="286">21</tspan><tspan x="701" y="297">22</tspan><tspan x="701" y="309">23</tspan><tspan x="701" y="320">24</tspan><tspan x="701" y="331">25</tspan><tspan x="701" y="343">26</tspan><tspan x="701" y="354">27</tspan><tspan x="701" y="366">28</tspan><tspan x="701" y="388">10</tspan><tspan x="701" y="400">11</tspan><tspan x="701" y="411">12</tspan><tspan x="701" y="423">13</tspan><tspan x="701" y="434">14</tspan><tspan x="701" y="445">15</tspan><tspan x="701" y="457">16</tspan><tspan x="701" y="468">17</tspan></text>
<text><tspan x="724" y="182">P0.0</tspan><tspan x="724" y="194">P0.1</tspan><tspan x="724" y="205">P0.2</tspan><tspan x="724" y="216">P0.3</tspan><tspan x="724" y="228">P0.4</tspan><tspan x="724" y="239">P0.5</tspan><tspan x="724" y="251">P0.6</tspan><tspan x="724" y="262">P0.7</tspan><tspan x="724" y="285">P2.0</tspan><tspan x="724" y="296">P2.1</tspan><tspan x="724" y="308">P2.2</tspan><tspan x="724" y="319">P2.3</tspan><tspan x="724" y="330">P2.4</tspan><tspan x="724" y="342">P2.5</tspan><tspan x="724" y="353">P2.6</tspan><tspan x="724" y="365">P2.7</tspan><tspan x="724" y="387">P3.0</tspan><tspan x="724" y="399">P3.1</tspan><tspan x="724" y="410">P3.2</tspan><tspan x="724" y="422">P3.3</tspan><tspan x="724" y="433">P3.4</tspan><tspan x="724" y="444">P3.5</tspan><tspan x="724" y="456">P3.6</tspan><tspan x="724" y="467">P3.7</tspan></text>
<text><tspan x="273" y="610">IN1</tspan><tspan x="273" y="621">IN2</tspan><tspan x="273" y="633">IN3</tspan><tspan x="273" y="644">IN4</tspan><tspan x="273" y="656">ENA</tspan><tspan x="273" y="667">ENB</tspan><tspan x="273" y="690">SENSA</tspan><tspan x="273" y="701">SENSB</tspan><tspan x="303" y="609">VCC</tspan><tspan x="353" y="609">VS</tspan><tspan x="326" y="702">GND</tspan><tspan x="222" y="604">P3.2</tspan><tspan x="222" y="616">P3.3</tspan><tspan x="417" y="615">2</tspan><tspan x="417" y="639">3</tspan><tspan x="417" y="662">13</tspan><tspan x="417" y="685">14</tspan></text>
<text class="e"><tspan x="399" y="621">OUT1</tspan><tspan x="399" y="644">OUT2</tspan><tspan x="399" y="667">OUT3</tspan><tspan x="399" y="690">OUT4</tspan><tspan x="257" y="605">5</tspan><tspan x="257" y="616">7</tspan><tspan x="257" y="628">10</tspan><tspan x="257" y="639">12</tspan><tspan x="257" y="651">6</tspan><tspan x="257" y="662">11</tspan><tspan x="257" y="685">1</tspan><tspan x="257" y="696">15</tspan></text>
<text><tspan x="895" y="274">P0.0</tspan><tspan x="895" y="285">P0.1</tspan><tspan x="895" y="296">P0.2</tspan><tspan x="895" y="308">P0.3</tspan><tspan x="895" y="319">P0.4</tspan><tspan x="895" y="331">P0.5</tspan><tspan x="895" y="342">P0.6</tspan><tspan x="884" y="536">P2.0</tspan><tspan x="884" y="570">P2.1</tspan><tspan x="884" y="604">P2.2</tspan><tspan x="884" y="638">P2.3</tspan><tspan x="884" y="672">P2.4</tspan><tspan x="884" y="707">P2.5</tspan></text>
<text class="net" transform="translate(607 720) rotate(-90)">P1.1</text>
<text class="net" transform="translate(709 720) rotate(-90)">P1.0</text>
<text class="net" transform="translate(994 243) rotate(-90)">P0.7</text>
</g>

<g><use href="#b" x="256" y="168"/><use href="#b" x="256" y="236"/><use href="#r" x="302" y="316"/><use href="#r" x="347" y="316"/><use href="#r" x="296" y="362"/><use href="#r" x="353" y="362"/><use href="#b" x="290" y="407"/><use href="#r" x="347" y="407"/>
<use href="#r" x="523" y="259"/><use href="#r" x="523" y="316"/><use href="#r" x="523" y="327"/><use href="#y" x="523" y="339"/><use href="#r" x="523" y="384"/><use href="#b" x="523" y="396"/><use href="#r" x="523" y="407"/><use href="#r" x="523" y="419"/><use href="#r" x="523" y="430"/><use href="#r" x="523" y="441"/><use href="#r" x="523" y="453"/><use href="#r" x="523" y="464"/>
<use href="#b" x="697" y="179"/><use href="#b" x="697" y="191"/><use href="#r" x="697" y="202"/><use href="#b" x="697" y="213"/><use href="#b" x="697" y="225"/><use href="#r" x="697" y="236"/><use href="#b" x="697" y="248"/><use href="#y" x="697" y="259"/><use href="#r" x="762" y="156"/><use href="#b" x="762" y="179"/><use href="#b" x="762" y="191"/><use href="#r" x="762" y="202"/><use href="#b" x="762" y="213"/><use href="#b" x="762" y="225"/><use href="#r" x="762" y="236"/><use href="#b" x="762" y="248"/><use href="#y" x="762" y="259"/>
<use href="#r" x="697" y="282"/><use href="#r" x="697" y="293"/><use href="#r" x="697" y="305"/><use href="#r" x="697" y="316"/><use href="#r" x="697" y="327"/><use href="#r" x="697" y="339"/><use href="#r" x="697" y="350"/><use href="#r" x="697" y="362"/><use href="#r" x="697" y="384"/><use href="#r" x="697" y="396"/><use href="#b" x="697" y="407"/><use href="#b" x="697" y="419"/><use href="#r" x="697" y="430"/><use href="#r" x="697" y="441"/><use href="#r" x="697" y="453"/><use href="#r" x="697" y="464"/>
<use href="#b" x="245" y="544"/><use href="#r" x="290" y="544"/><use href="#r" x="382" y="544"/><use href="#b" x="427" y="544"/><use href="#b" x="260" y="601"/><use href="#b" x="260" y="612"/><use href="#y" x="260" y="624"/><use href="#y" x="260" y="635"/><use href="#r" x="260" y="647"/><use href="#y" x="260" y="658"/><use href="#b" x="260" y="681"/><use href="#b" x="260" y="692"/>
<use href="#r" x="604" y="583"/><use href="#b" x="615" y="697"/><use href="#r" x="706" y="583"/><use href="#r" x="718" y="697"/>
<use href="#b" x="917" y="270"/><use href="#b" x="917" y="281"/><use href="#r" x="917" y="293"/><use href="#b" x="917" y="304"/><use href="#b" x="917" y="316"/><use href="#r" x="917" y="327"/><use href="#b" x="917" y="338"/><use href="#y" x="991" y="241"/></g>

<circle cx="495" cy="617" r="23" fill="#c4c4c4" stroke="#800000" stroke-width="2"/><circle cx="495" cy="617" r="6" fill="#dfe0d0" stroke="#800000" stroke-width="2"/>
<path d="M490 603q10-2 18 6" fill="none" stroke="#00008b" stroke-width="6"/><path d="M502 631q-10 2-18-4" fill="none" stroke="#00008b" stroke-width="6"/><path d="M499 603.500h2" stroke="#ff0"/><path d="M490 632.500h2" stroke="#0f0"/>
<path d="M479.500 643.500h32v11h-32z" fill="#004000" stroke="#00e000"/><text class="rpm" x="495" y="652">+19.9</text>

<circle cx="609" cy="674" r="13.500" fill="#006a00" stroke="#800000" stroke-width="2"/><path class="p" d="M609 660v10M609 680v9"/><path d="M603 670h12l-6 9z" fill="#00ff00" stroke="#800000" stroke-width="2"/><path class="p" d="M603 680h12"/>
<circle cx="712" cy="674" r="13.500" fill="#000" stroke="#800000" stroke-width="2"/><path class="p" d="M712 660v10M712 680v9"/><path d="M706 670h12l-6 9z" fill="#000" stroke="#800000" stroke-width="2"/><path class="p" d="M706 680h12"/>

<path d="M929 253h74v108h-74z" fill="#400000" stroke="#800000" stroke-width="2"/>
<g fill="#ff0000"><path d="M948 268l5-5h31l4 4-6 5h-30zM987 268l4 5-2 30-4 4-4-5 2-28zM947 307l5-4h31l3 4-5 4h-31zM946 308l4 5-1 28-5 5-3-5 1-28zM945 346l5-4h31l3 3-5 4h-30z"/></g>
<g fill="#640000"><path d="M947 269l4 4-2 29-4 4-4-4 2-28zM985 308l5 4-2 29-4 4-4-4 2-28z"/></g>

<use href="#key" x="872" y="538"/><use href="#key" x="872" y="572"/><use href="#key" x="872" y="606"/><use href="#key" x="872" y="640"/><use href="#key" x="872" y="674"/><use href="#key" x="872" y="709"/>
<use href="#r" x="900" y="532"/><use href="#r" x="900" y="566"/><use href="#r" x="900" y="601"/><use href="#r" x="900" y="635"/><use href="#r" x="900" y="669"/><use href="#r" x="900" y="703"/>
<use href="#b" x="957" y="532"/><use href="#b" x="957" y="566"/><use href="#b" x="957" y="601"/><use href="#b" x="957" y="635"/><use href="#b" x="957" y="669"/><use href="#b" x="957" y="703"/>

<g class="zh">
<text class="sm"><tspan x="270" y="283">晶振电路</tspan><tspan x="283" y="454">复位电路</tspan></text>
<text><tspan x="415" y="501">单片机最小系统</tspan><tspan x="375" y="786">电机控制</tspan><tspan x="588" y="752">正转</tspan><tspan x="690" y="752">反转</tspan><tspan x="941" y="410">挡位</tspan><tspan x="910" y="763">独立按键</tspan><tspan x="1032" y="547">启动</tspan><tspan x="1032" y="582">停止</tspan><tspan x="1032" y="615">正转</tspan><tspan x="1032" y="649">反转</tspan><tspan x="1032" y="685">加速</tspan><tspan x="1032" y="719">减速</tspan></text>
</g>
</g>
</svg>
</section>
</main>
<footer class="status">
<i class="grip"></i>
<div class="run">
<button aria-label="Play"><svg class="icon" viewBox="0 0 16 16"><path d="M4.500 1l7 7-7 7z" fill="#0bb50b" stroke="#078307"/></svg></button>
<button aria-label="Step"><svg class="icon" viewBox="0 0 16 16"><path d="M2 1v14" stroke="#0b62c4" stroke-width="2"/><path d="M5.500 1l8 7-8 7z" fill="#0b62c4" stroke="#084a96"/></svg></button>
<button aria-label="Pause"><svg class="icon" viewBox="0 0 16 16"><path d="M4 1h3v14H4zM9 1h3v14H9z" fill="#0b62c4"/></svg></button>
<button aria-label="Stop"><svg class="icon" viewBox="0 0 16 16"><path d="M1.500 1.500h13v13h-13z" fill="#0b69d2" stroke="#084a96"/></svg></button>
</div>
<i class="sep"></i>
<button class="msgs"><svg class="icon" viewBox="0 0 16 16"><circle cx="8" cy="8" r="6.500" fill="#0d9a12" stroke="#055a08"/><path d="M6 7h2v4m-2 .5h4.500M8 3.500v2" fill="none" stroke="#fff" stroke-width="1.500"/></svg>5 Message(s)</button>
<i class="grip"></i>
<span class="anim">ANIMATING: 00:01:06.900000 (CPU load 16%)</span>
<i class="grip"></i>
<span class="coord">x:</span><span class="coord wide">+6900.0</span><span class="coord">y:</span><span class="coord wide">-2000.0</span>
<span class="mark">CSDN @ENGLISH_HHZ</span>
</footer>
</div>
</div>
</body>
</html>
```
FILE: styles.css
```css
* { box-sizing: border-box; }
body { margin: 0; font: 12px/16px "Noto Sans", "Noto Sans CJK SC", sans-serif; color: #000; }
button { border: 0; background: none; padding: 0; margin: 0; font: inherit; color: inherit; flex: none; }
.icon { width: 16px; height: 16px; flex: none; display: block; fill: none; }
.window { height: 100vh; display: flex; flex-direction: column; border-top: 2px solid #2f3036; background: #b9d1ea; overflow: hidden; }
.titlebar { flex: none; height: 28px; display: flex; align-items: center; gap: 5px; padding: 6px 8px 0; background: linear-gradient(#9ab3d1, #b9d1ea); white-space: nowrap; }
.client { flex: 1; min-height: 0; margin: 0 0 3px 7px; display: flex; flex-direction: column; background: #e3eaf1; }

.menubar { flex: none; height: 19px; display: flex; gap: 1px; align-items: center; background: linear-gradient(#fff, #eef0f8 36%, #d6dcef 40%, #e2e5f4); border-bottom: 1px solid #b4b9cd; }
.menubar button { padding: 2px 7px 0; height: 18px; line-height: 16px; }

.toolbars { flex: none; height: 27px; display: flex; gap: 5px; overflow: hidden; }
.bar { flex: none; display: flex; align-items: center; padding: 2px 4px 3px 0; border-right: 1px solid #9fc6dc; border-bottom: 1px solid #a9cbde; background: linear-gradient(#e6f2f9, #d3e8f4 45%, #b6daec); }
.bar.last { flex: 1 0 auto; border-right: 0; }
.bar button, .vbar button { width: 22px; height: 22px; display: flex; align-items: center; justify-content: center; }
.bar .on, .vbar .on { border: 1px solid #5c97b5; background: #bcdcee; }
.grip { flex: none; width: 10px; height: 24px; background: radial-gradient(circle at 5px 2px, #a4b2bd 1px, transparent 2px) 0 0 / 10px 4px; }
.sep { flex: none; width: 2px; height: 17px; margin: 0 3px; background: #a5aeb5; border-right: 1px solid #fff; }
.variant { position: relative; width: 97px; height: 22px; }
.variant select { width: 100%; height: 100%; appearance: none; border: 1px solid #707070; border-radius: 3px; padding: 0 3px; background: linear-gradient(#f2f2f2, #ebebeb 50%, #d5d5d5); font: 11px/18px Roboto, sans-serif; color: #000; }
.variant svg { position: absolute; right: 4px; top: 9px; width: 8px; height: 5px; }

.tabs { flex: none; height: 35px; padding-top: 4px; display: flex; align-items: flex-start; border-bottom: 6px solid #b5d9ea; box-shadow: inset 0 -1px #6b9fba; }
.slope { width: 24px; height: 25px; display: block; }
.tab { height: 25px; display: flex; align-items: center; padding: 0 10px 2px 0; border: 1px solid #6b9fba; border-width: 1px 1px 0 0; background: linear-gradient(#e1eff6, #cae2ee); font: bold 12px/16px "Liberation Sans", sans-serif; color: #2b5873; }
.tab .icon { margin: 0 2px 0 -3px; }
.tab button { margin-left: 8px; }
.tab button svg { display: block; width: 12px; height: 12px; }

.work { flex: 1; min-height: 0; display: flex; }
.tools { width: 28px; flex: none; display: flex; flex-direction: column; gap: 5px; }
.vbar { display: flex; flex-direction: column; align-items: flex-start; padding: 0 0 2px 2px; border-bottom: 1px solid #9fc6dc; background: linear-gradient(to right, #e6f2f9, #cfe6f3 50%, #b0d6ea); }
.vbar button { height: 21px; }
.vbar .grip { width: 26px; height: 11px; background: radial-gradient(circle at 2px 5px, #a4b2bd 1px, transparent 2px) 0 0 / 4px 11px; }
.vbar .sep { width: 22px; height: 2px; margin: 1px 2px; background: #a5aeb5; border: 0; border-bottom: 1px solid #fff; }
.letter { font: bold 18px/20px "Liberation Serif", serif; color: #333; }
.angle { width: 24px; height: 15px; margin: 2px 0 4px 1px; padding: 0 1px; border: 0; background: #fff; font: 11px/14px Roboto, sans-serif; }

.side { width: 121px; flex: none; display: flex; flex-direction: column; gap: 5px; }
.preview { flex: none; height: 100px; border: 1px solid #666; background: #dfe0d0; }
.preview svg { display: block; width: 100%; height: 100%; }
.devices { flex: 1; min-height: 0; border: 1px solid #666; background: #fff; font: 11px/13px Roboto, sans-serif; }
.devhead { height: 24px; display: flex; align-items: center; gap: 6px; padding-left: 3px; background: linear-gradient(#eef6fa, #b9d9e9); color: #444; font-size: 12px; }
.devhead button { width: 15px; height: 15px; border-radius: 2px; background: #0b50d8; color: #fff; font: bold 13px/15px "Liberation Sans", sans-serif; }
.devhead span { margin-left: 13px; }
.devices ul { list-style: none; margin: 0; padding: 0 1px; }
.devices li { height: 13px; padding-left: 2px; }
.devices .sel { background: #3399ff; color: #fff; }

.canvas { flex: 1; min-width: 0; margin-left: 4px; border: 1px solid #666; border-right: 0; background: #dfe0d0; overflow: hidden; box-shadow: -4px 0 #b5d9ea; }
.sheet { display: block; width: 100%; height: 100%; }
.w { fill: none; stroke: #004000; stroke-width: 2; }
.p { fill: none; stroke: #800000; stroke-width: 2; }
.c { fill: #c8c8aa; stroke: #800000; stroke-width: 2; }
.hatched { fill: url(#hatch); stroke: #800000; stroke-width: 2; }
.node { fill: #004000; }
.t { font: 9px "Liberation Sans", Arial, sans-serif; }
.t .big { font-size: 14px; }
.t .g { fill: #808080; }
.t .net { fill: #333; }
.e { text-anchor: end; }
.rpm { font: 9px "Liberation Sans", Arial, sans-serif; fill: #00ff00; text-anchor: middle; }
.zh { font: bold 19px "Noto Sans CJK SC", sans-serif; fill: #800000; }
.zh .sm { font-size: 14px; }

.status { position: relative; flex: none; height: 25px; margin-top: 3px; display: flex; align-items: center; background: linear-gradient(#e6f2f9, #d3e8f4 45%, #b6daec); font: 11px/16px Roboto, sans-serif; white-space: nowrap; }
.run { display: flex; gap: 20px; padding: 0 12px 0 11px; }
.msgs { display: flex; align-items: center; gap: 6px; margin: 0 4px 0 6px; }
.anim { flex: 0 1 404px; margin-right: 6px; padding-left: 4px; border-right: 1px solid #9fc6dc; color: #004000; }
.coord { flex: none; width: 24px; }
.coord.wide { width: 45px; }
.coord.wide + .coord { width: 27px; }
.mark { position: absolute; right: 15px; top: 0; font: 16px/20px "Noto Sans", sans-serif; color: #8f9aa3; text-shadow: 1px 1px #fff; }
```
